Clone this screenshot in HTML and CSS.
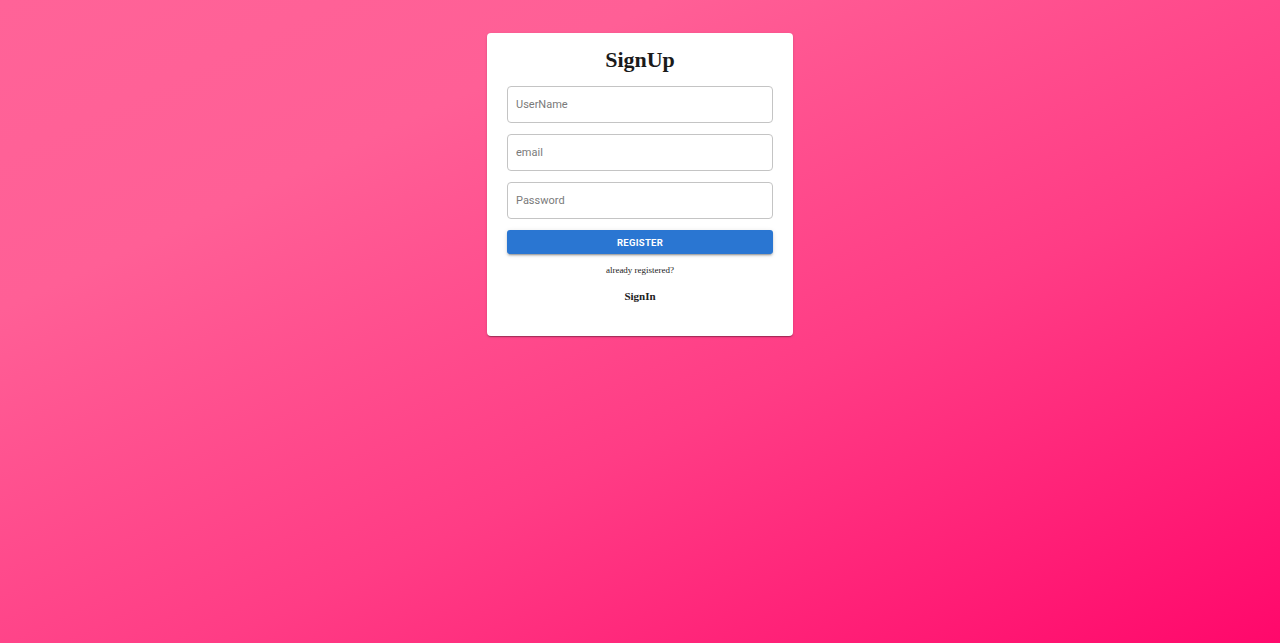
FILE: index.html
```html
<!DOCTYPE html>
<html>
<head>
<meta charset="utf-8">
<link rel="stylesheet" href="styles.css">
</head>
<body>
<div class="page">
  <div class="card">
    <h1 class="title">SignUp</h1>
    <form class="form">
      <input class="field" type="text" placeholder="UserName">
      <input class="field" type="email" placeholder="email">
      <input class="field" type="password" placeholder="Password">
      <button class="btn" type="button">REGISTER</button>
    </form>
    <p class="note">already registered?</p>
    <p class="link">SignIn</p>
  </div>
</div>
</body>
</html>
```

FILE: styles.css
```css
html, body {
  margin: 0;
  height: 100%;
}
body {
  background: linear-gradient(155deg, #ff6398 0%, #ff5f96 25%, #ff3c85 60%, #ff086b 100%);
  font-family: "Liberation Serif", serif;
}
.page {
  display: flex;
  justify-content: center;
  padding-top: 33px;
}
.card {
  width: 306px;
  box-sizing: border-box;
  background: #fff;
  border-radius: 4px;
  padding: 13px 20px 33px;
  box-shadow: 0 2px 1px -1px rgba(0,0,0,0.2), 0 1px 1px 0 rgba(0,0,0,0.14), 0 1px 3px 0 rgba(0,0,0,0.12);
}
.title {
  margin: 0 0 12px;
  text-align: center;
  font-size: 22px;
  line-height: 28px;
  font-weight: bold;
  color: #1a1a1a;
}
.form {
  display: flex;
  flex-direction: column;
  gap: 11px;
}
.field {
  height: 37px;
  box-sizing: border-box;
  border: 1px solid #c4c4c4;
  border-radius: 4px;
  padding: 0 8px;
  font-family: Roboto, sans-serif;
  font-size: 11px;
  color: #333;
  outline: none;
}
.field::placeholder {
  color: #7a7a7a;
}
.btn {
  height: 24px;
  border: none;
  border-radius: 3px;
  background: #2a76d2;
  color: #fff;
  font-family: Roboto, sans-serif;
  font-size: 9.5px;
  font-weight: 700;
  letter-spacing: 0.3px;
  box-shadow: 0 3px 1px -2px rgba(0,0,0,0.2), 0 2px 2px 0 rgba(0,0,0,0.14), 0 1px 5px 0 rgba(0,0,0,0.12);
  padding: 0;
}
.note {
  margin: 10px 0 0;
  text-align: center;
  font-size: 9px;
  line-height: 12px;
  color: #222;
}
.link {
  margin: 14px 0 0;
  text-align: center;
  font-size: 11px;
  line-height: 13px;
  font-weight: bold;
  color: #222;
}
```
